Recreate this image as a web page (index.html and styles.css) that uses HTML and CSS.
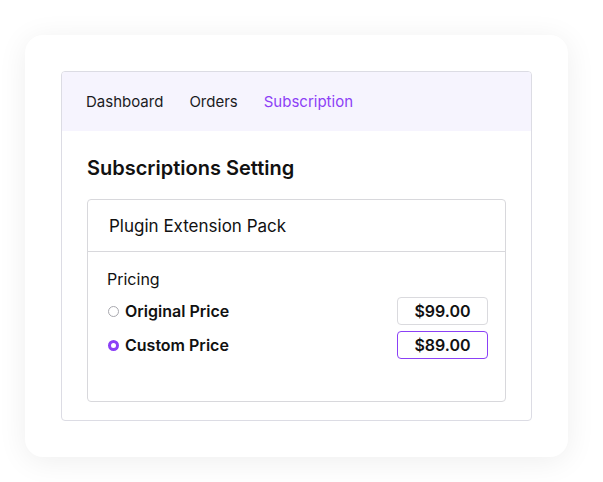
FILE: index.html
```html
<!DOCTYPE html>
<html lang="en">
<head>
    <meta charset="utf-8">
    <title>Subscriptions Setting</title>
    <link rel="stylesheet" href="styles.css">
</head>
<body>

<div class="frame">
    <div class="panel">
        <nav class="tabs">
            <a href="#">Dashboard</a>
            <a href="#">Orders</a>
            <a href="#" class="active">Subscription</a>
        </nav>

        <div class="content">
            <h1>Subscriptions Setting</h1>

            <div class="product">
                <div class="productHead">Plugin Extension Pack</div>
                <div class="productBody">
                    <div class="label">Pricing</div>

                    <div class="priceRow">
                        <span class="radio"></span>
                        <span class="priceName">Original Price</span>
                        <span class="priceBox">$99.00</span>
                    </div>
                    <div class="priceRow">
                        <span class="radio checked"></span>
                        <span class="priceName">Custom Price</span>
                        <span class="priceBox selected">$89.00</span>
                    </div>
                </div>
            </div>
        </div>
    </div>
</div>

</body>
</html>
```

FILE: styles.css
```css
body {
    margin: 0;
    padding: 35px 35px 25px 25px;
    background: #fff;
    font-family: Inter, "Noto Sans", sans-serif;
    color: #111;
}

.frame {
    background: #fff;
    border-radius: 18px;
    padding: 36px;
    box-shadow: 0 4px 30px rgba(0, 0, 0, 0.07);
}

.panel {
    border: 1px solid #dcdce4;
    border-radius: 4px;
    overflow: hidden;
    padding-bottom: 18px;
}

.tabs {
    display: flex;
    gap: 26px;
    align-items: center;
    height: 59px;
    padding: 0 24px;
    background: #f6f4fe;
}

.tabs a {
    font-size: 15px;
    color: #1b1b1f;
    text-decoration: none;
}

.tabs a.active {
    color: #8d3ff6;
}

.content {
    padding: 0 25px;
}

h1 {
    margin: 0;
    padding: 25px 0 19px 0;
    font-size: 20px;
    font-weight: 600;
    line-height: 24px;
}

.product {
    border: 1px solid #d8d8dc;
    border-radius: 4px;
}

.productHead {
    height: 51px;
    line-height: 52px;
    padding: 0 21px;
    font-size: 17px;
    border-bottom: 1px solid #d8d8dc;
}

.productBody {
    padding: 16px 17px 42px 19px;
}

.label {
    font-size: 16px;
    line-height: 22px;
    margin-bottom: 7px;
}

.priceRow {
    display: flex;
    align-items: center;
    height: 28px;
    margin-bottom: 6px;
}

.priceRow:last-child {
    margin-bottom: 0;
}

.radio {
    width: 9px;
    height: 9px;
    border: 1px solid #a8a8ae;
    border-radius: 50%;
    margin: 0 6px 0 1px;
}

.radio.checked {
    width: 5px;
    height: 5px;
    border: 3px solid #8b40f6;
}

.priceName {
    flex: 1;
    font-size: 16px;
    font-weight: 600;
}

.priceBox {
    width: 89px;
    height: 26px;
    line-height: 26px;
    text-align: center;
    border: 1px solid #dadade;
    border-radius: 4px;
    font-size: 16px;
    font-weight: 600;
}

.priceBox.selected {
    border-color: #8b40f6;
}
```
